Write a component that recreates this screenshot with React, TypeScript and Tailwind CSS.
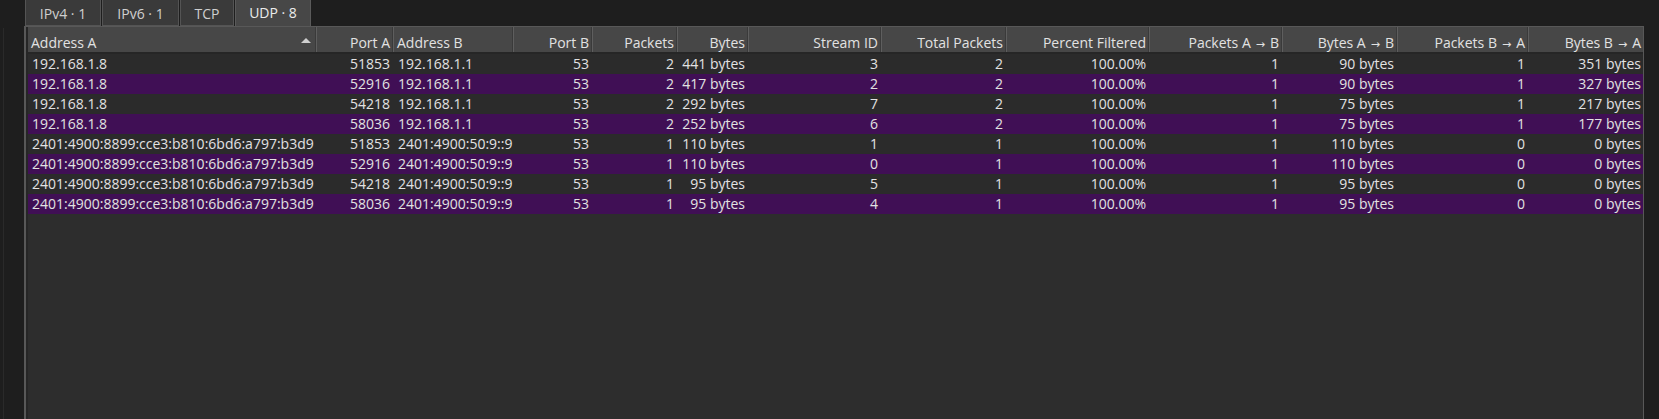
type Row = string[];

const columns = [
    { label: "Address A", w: "w-[289px]", left: true, sort: true },
    { label: "Port A", w: "w-[77px]" },
    { label: "Address B", w: "w-[120px]", left: true },
    { label: "Port B", w: "w-[79px]" },
    { label: "Packets", w: "w-[85px]" },
    { label: "Bytes", w: "w-[71px]" },
    { label: "Stream ID", w: "w-[133px]" },
    { label: "Total Packets", w: "w-[125px]" },
    { label: "Percent Filtered", w: "w-[143px]" },
    { label: "Packets A → B", w: "w-[133px]" },
    { label: "Bytes A → B", w: "w-[115px]" },
    { label: "Packets B → A", w: "w-[131px]" },
    { label: "Bytes B → A", w: "w-[116px]" },
];

const v4 = "192.168.1.8";
const v6 = "2401:4900:8899:cce3:b810:6bd6:a797:b3d9";
const dns6 = "2401:4900:50:9::9";

const rows: Row[] = [
    [v4, "51853", "192.168.1.1", "53", "2", "441 bytes", "3", "2", "100.00%", "1", "90 bytes", "1", "351 bytes"],
    [v4, "52916", "192.168.1.1", "53", "2", "417 bytes", "2", "2", "100.00%", "1", "90 bytes", "1", "327 bytes"],
    [v4, "54218", "192.168.1.1", "53", "2", "292 bytes", "7", "2", "100.00%", "1", "75 bytes", "1", "217 bytes"],
    [v4, "58036", "192.168.1.1", "53", "2", "252 bytes", "6", "2", "100.00%", "1", "75 bytes", "1", "177 bytes"],
    [v6, "51853", dns6, "53", "1", "110 bytes", "1", "1", "100.00%", "1", "110 bytes", "0", "0 bytes"],
    [v6, "52916", dns6, "53", "1", "110 bytes", "0", "1", "100.00%", "1", "110 bytes", "0", "0 bytes"],
    [v6, "54218", dns6, "53", "1", "95 bytes", "5", "1", "100.00%", "1", "95 bytes", "0", "0 bytes"],
    [v6, "58036", dns6, "53", "1", "95 bytes", "4", "1", "100.00%", "1", "95 bytes", "0", "0 bytes"],
];

const tabs = [
    { label: "IPv4 · 1", w: "w-[76px]" },
    { label: "IPv6 · 1", w: "w-[77px]" },
    { label: "TCP", w: "w-[54px]" },
    { label: "UDP · 8", w: "w-[76px]", active: true },
];

// Open Sans's arrow is tiny, DejaVu's one reads like the original
const Label = ({ text }: { text: string }) => {
    const parts = text.split(" → ");
    if (parts.length === 1) return <span>{text}</span>;
    return (
        <span className="flex items-baseline">
            <span>{parts[0]}</span>
            <span className="font-['DejaVu_Sans',sans-serif] text-[11px] mx-[5px]">→</span>
            <span>{parts[1]}</span>
        </span>
    );
};

function Tabs() {
    return (
        <div className="flex h-[26px] pl-[25px] gap-[1px]">
            {tabs.map((t) =>
                t.active ? (
                    <div key={t.label} className={`${t.w} h-[27px] -mt-[1px] flex items-start justify-center pt-[3px] bg-[#474747] border-x border-[#5a5a5a] text-[#ececec] z-10`}>
                        {t.label}
                    </div>
                ) : (
                    <div key={t.label} className={`${t.w} h-[26px] flex items-center justify-center pt-[1px] bg-[#3a3a3a] border border-t-0 border-[#545454] text-[#cfcfcf]`}>
                        {t.label}
                    </div>
                )
            )}
        </div>
    );
}

function Header() {
    return (
        <div className="flex h-[27px] bg-[#474747] border-b-2 border-[#262626] shrink-0">
            {columns.map((c) => (
                <div
                    key={c.label}
                    className={`${c.w} shrink-0 h-full relative flex items-start pt-[5px] whitespace-nowrap overflow-hidden border-r border-[#5e5e5e] shadow-[inset_-1px_0_0_#3a3a3a] ${c.left ? "justify-start pl-[3px]" : "justify-end pr-[3px]"}`}
                >
                    <Label text={c.label} />
                    {c.sort && (
                        <svg className="absolute right-[5px] top-[11px]" width="10" height="5" viewBox="0 0 10 5">
                            <path d="M0 5 L5 0 L10 5 Z" fill="#cfcfcf" />
                        </svg>
                    )}
                </div>
            ))}
        </div>
    );
}

function DataRow({ row, odd }: { row: Row; odd: boolean }) {
    return (
        <div className={`flex h-[20px] leading-[20px] ${odd ? "bg-[#400f55]" : "bg-[#2b2b2b]"}`}>
            {row.map((cell, i) => (
                <div
                    key={i}
                    className={`${columns[i].w} shrink-0 whitespace-nowrap overflow-hidden ${columns[i].left ? "text-left pl-[4px]" : "text-right pr-[4px]"}`}
                >
                    {cell}
                </div>
            ))}
        </div>
    );
}

export default function App() {
    return (
        <div className="w-[1659px] h-[419px] bg-[#1e1e1e] overflow-hidden flex flex-col text-[14px] text-[#e2e2e2] font-['Open_Sans','Noto_Sans',sans-serif]">
            <Tabs />
            <div className="flex flex-1 min-h-0">
                <div className="w-[24px] shrink-0 flex pt-[2px]">
                    <div className="w-[4px] h-full border-r border-[#2a2a2a]" />
                </div>
                <div className="w-[1620px] shrink-0 border-t border-l-2 border-r border-[#585858] bg-[#2d2d2d] flex flex-col min-h-0">
                    <div className="flex-1 min-h-0 border-l-2 border-[#262626] overflow-hidden flex flex-col">
                        <Header />
                        {rows.map((r, i) => (
                            <DataRow key={i} row={r} odd={i % 2 === 1} />
                        ))}
                    </div>
                </div>
            </div>
        </div>
    );
}
